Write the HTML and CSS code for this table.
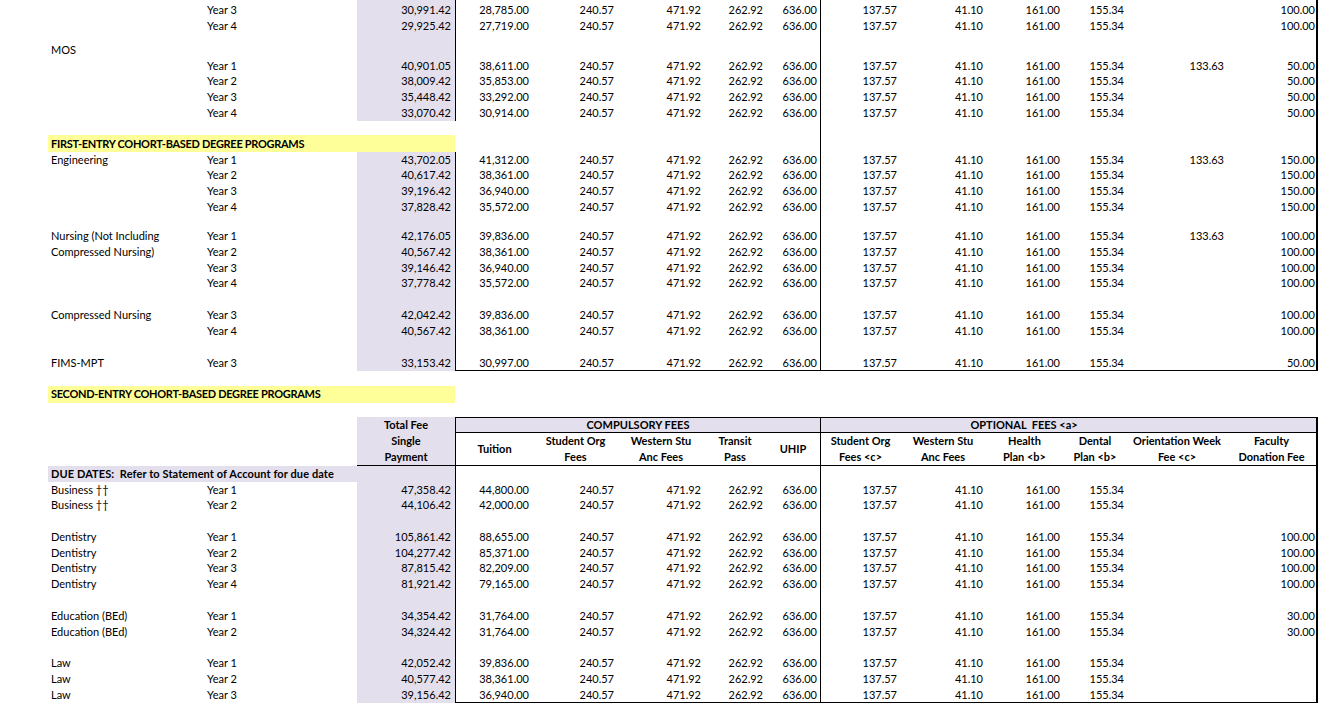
FILE: index.html
```html
<!DOCTYPE html>
<html>
<head>
<meta charset="utf-8">
<title>Fee Schedule</title>
<link rel="stylesheet" href="styles.css">
</head>
<body>
<div class="sheet">
  <div class="row h2"><div class="cell tot"></div><div class="cell tu"></div><div class="cell opt"></div><div class="cell fac"></div></div>

  <div class="row"><div class="cell name"></div><div class="cell yr">Year 3</div><div class="cell num tot">30,991.42</div><div class="cell num tu">28,785.00</div><div class="cell num sof">240.57</div><div class="cell num">471.92</div><div class="cell num">262.92</div><div class="cell num">636.00</div><div class="cell num opt">137.57</div><div class="cell num">41.10</div><div class="cell num">161.00</div><div class="cell num">155.34</div><div class="cell num fac">100.00</div></div>
  <div class="row"><div class="cell name"></div><div class="cell yr">Year 4</div><div class="cell num tot">29,925.42</div><div class="cell num tu">27,719.00</div><div class="cell num sof">240.57</div><div class="cell num">471.92</div><div class="cell num">262.92</div><div class="cell num">636.00</div><div class="cell num opt">137.57</div><div class="cell num">41.10</div><div class="cell num">161.00</div><div class="cell num">155.34</div><div class="cell num fac">100.00</div></div>
  <div class="row h85"><div class="cell tot"></div><div class="cell tu"></div><div class="cell opt"></div><div class="cell fac"></div></div>

  <div class="row"><div class="cell name">MOS</div><div class="cell tot"></div><div class="cell tu"></div><div class="cell opt"></div><div class="cell fac"></div></div>
  <div class="row"><div class="cell name"></div><div class="cell yr">Year 1</div><div class="cell num tot">40,901.05</div><div class="cell num tu">38,611.00</div><div class="cell num sof">240.57</div><div class="cell num">471.92</div><div class="cell num">262.92</div><div class="cell num">636.00</div><div class="cell num opt">137.57</div><div class="cell num">41.10</div><div class="cell num">161.00</div><div class="cell num">155.34</div><div class="cell num">133.63</div><div class="cell num fac">50.00</div></div>
  <div class="row"><div class="cell name"></div><div class="cell yr">Year 2</div><div class="cell num tot">38,009.42</div><div class="cell num tu">35,853.00</div><div class="cell num sof">240.57</div><div class="cell num">471.92</div><div class="cell num">262.92</div><div class="cell num">636.00</div><div class="cell num opt">137.57</div><div class="cell num">41.10</div><div class="cell num">161.00</div><div class="cell num">155.34</div><div class="cell num fac">50.00</div></div>
  <div class="row"><div class="cell name"></div><div class="cell yr">Year 3</div><div class="cell num tot">35,448.42</div><div class="cell num tu">33,292.00</div><div class="cell num sof">240.57</div><div class="cell num">471.92</div><div class="cell num">262.92</div><div class="cell num">636.00</div><div class="cell num opt">137.57</div><div class="cell num">41.10</div><div class="cell num">161.00</div><div class="cell num">155.34</div><div class="cell num fac">50.00</div></div>
  <div class="row"><div class="cell name"></div><div class="cell yr">Year 4</div><div class="cell num tot">33,070.42</div><div class="cell num tu">30,914.00</div><div class="cell num sof">240.57</div><div class="cell num">471.92</div><div class="cell num">262.92</div><div class="cell num">636.00</div><div class="cell num opt">137.57</div><div class="cell num">41.10</div><div class="cell num">161.00</div><div class="cell num">155.34</div><div class="cell num fac">50.00</div></div>
  <div class="row h145"><div class="cell opt"></div><div class="cell fac"></div></div>

  <div class="row h165"><div class="cell ybar">FIRST-ENTRY COHORT-BASED DEGREE PROGRAMS</div><div class="cell opt"></div><div class="cell fac"></div></div>

  <div class="row"><div class="cell name">Engineering</div><div class="cell yr">Year 1</div><div class="cell num tot">43,702.05</div><div class="cell num tu">41,312.00</div><div class="cell num sof">240.57</div><div class="cell num">471.92</div><div class="cell num">262.92</div><div class="cell num">636.00</div><div class="cell num opt">137.57</div><div class="cell num">41.10</div><div class="cell num">161.00</div><div class="cell num">155.34</div><div class="cell num">133.63</div><div class="cell num fac">150.00</div></div>
  <div class="row"><div class="cell name"></div><div class="cell yr">Year 2</div><div class="cell num tot">40,617.42</div><div class="cell num tu">38,361.00</div><div class="cell num sof">240.57</div><div class="cell num">471.92</div><div class="cell num">262.92</div><div class="cell num">636.00</div><div class="cell num opt">137.57</div><div class="cell num">41.10</div><div class="cell num">161.00</div><div class="cell num">155.34</div><div class="cell num fac">150.00</div></div>
  <div class="row"><div class="cell name"></div><div class="cell yr">Year 3</div><div class="cell num tot">39,196.42</div><div class="cell num tu">36,940.00</div><div class="cell num sof">240.57</div><div class="cell num">471.92</div><div class="cell num">262.92</div><div class="cell num">636.00</div><div class="cell num opt">137.57</div><div class="cell num">41.10</div><div class="cell num">161.00</div><div class="cell num">155.34</div><div class="cell num fac">150.00</div></div>
  <div class="row"><div class="cell name"></div><div class="cell yr">Year 4</div><div class="cell num tot">37,828.42</div><div class="cell num tu">35,572.00</div><div class="cell num sof">240.57</div><div class="cell num">471.92</div><div class="cell num">262.92</div><div class="cell num">636.00</div><div class="cell num opt">137.57</div><div class="cell num">41.10</div><div class="cell num">161.00</div><div class="cell num">155.34</div><div class="cell num fac">150.00</div></div>
  <div class="row h135"><div class="cell tot"></div><div class="cell tu"></div><div class="cell opt"></div><div class="cell fac"></div></div>

  <div class="row"><div class="cell name">Nursing (Not Including</div><div class="cell yr">Year 1</div><div class="cell num tot">42,176.05</div><div class="cell num tu">39,836.00</div><div class="cell num sof">240.57</div><div class="cell num">471.92</div><div class="cell num">262.92</div><div class="cell num">636.00</div><div class="cell num opt">137.57</div><div class="cell num">41.10</div><div class="cell num">161.00</div><div class="cell num">155.34</div><div class="cell num">133.63</div><div class="cell num fac">100.00</div></div>
  <div class="row"><div class="cell name">Compressed Nursing)</div><div class="cell yr">Year 2</div><div class="cell num tot">40,567.42</div><div class="cell num tu">38,361.00</div><div class="cell num sof">240.57</div><div class="cell num">471.92</div><div class="cell num">262.92</div><div class="cell num">636.00</div><div class="cell num opt">137.57</div><div class="cell num">41.10</div><div class="cell num">161.00</div><div class="cell num">155.34</div><div class="cell num fac">100.00</div></div>
  <div class="row"><div class="cell name"></div><div class="cell yr">Year 3</div><div class="cell num tot">39,146.42</div><div class="cell num tu">36,940.00</div><div class="cell num sof">240.57</div><div class="cell num">471.92</div><div class="cell num">262.92</div><div class="cell num">636.00</div><div class="cell num opt">137.57</div><div class="cell num">41.10</div><div class="cell num">161.00</div><div class="cell num">155.34</div><div class="cell num fac">100.00</div></div>
  <div class="row"><div class="cell name"></div><div class="cell yr">Year 4</div><div class="cell num tot">37,778.42</div><div class="cell num tu">35,572.00</div><div class="cell num sof">240.57</div><div class="cell num">471.92</div><div class="cell num">262.92</div><div class="cell num">636.00</div><div class="cell num opt">137.57</div><div class="cell num">41.10</div><div class="cell num">161.00</div><div class="cell num">155.34</div><div class="cell num fac">100.00</div></div>
  <div class="row h16"><div class="cell tot"></div><div class="cell tu"></div><div class="cell opt"></div><div class="cell fac"></div></div>

  <div class="row"><div class="cell name">Compressed Nursing</div><div class="cell yr">Year 3</div><div class="cell num tot">42,042.42</div><div class="cell num tu">39,836.00</div><div class="cell num sof">240.57</div><div class="cell num">471.92</div><div class="cell num">262.92</div><div class="cell num">636.00</div><div class="cell num opt">137.57</div><div class="cell num">41.10</div><div class="cell num">161.00</div><div class="cell num">155.34</div><div class="cell num fac">100.00</div></div>
  <div class="row"><div class="cell name"></div><div class="cell yr">Year 4</div><div class="cell num tot">40,567.42</div><div class="cell num tu">38,361.00</div><div class="cell num sof">240.57</div><div class="cell num">471.92</div><div class="cell num">262.92</div><div class="cell num">636.00</div><div class="cell num opt">137.57</div><div class="cell num">41.10</div><div class="cell num">161.00</div><div class="cell num">155.34</div><div class="cell num fac">100.00</div></div>
  <div class="row h165"><div class="cell tot"></div><div class="cell tu"></div><div class="cell opt"></div><div class="cell fac"></div></div>

  <div class="row end"><div class="cell name">FIMS-MPT</div><div class="cell yr">Year 3</div><div class="cell num tot">33,153.42</div><div class="cell num tu">30,997.00</div><div class="cell num sof">240.57</div><div class="cell num">471.92</div><div class="cell num">262.92</div><div class="cell num">636.00</div><div class="cell num opt">137.57</div><div class="cell num">41.10</div><div class="cell num">161.00</div><div class="cell num">155.34</div><div class="cell num or"></div><div class="cell num fac">50.00</div></div>
  <div class="row h15"></div>

  <div class="row h165"><div class="cell ybar">SECOND-ENTRY COHORT-BASED DEGREE PROGRAMS</div></div>
  <div class="row h145"></div>

  <div class="head">
    <div class="hc htot">Total Fee<br>Single<br>Payment</div>
    <div class="hc hgrp hcomp">COMPULSORY FEES</div>
    <div class="hc hgrp hoptg">OPTIONAL&nbsp; FEES &lt;a&gt;</div>
    <div class="hc hgrp hfac1"></div>
    <div class="hc hsub hl c4">Tuition</div>
    <div class="hc hsub c5">Student Org<br>Fees</div>
    <div class="hc hsub c6">Western Stu<br>Anc Fees</div>
    <div class="hc hsub c7">Transit<br>Pass</div>
    <div class="hc hsub c8">UHIP</div>
    <div class="hc hsub hl c9">Student Org<br>Fees &lt;c&gt;</div>
    <div class="hc hsub c10">Western Stu<br>Anc Fees</div>
    <div class="hc hsub c11">Health<br>Plan &lt;b&gt;</div>
    <div class="hc hsub c12">Dental<br>Plan &lt;b&gt;</div>
    <div class="hc hsub c13">Orientation Week<br>Fee &lt;c&gt;</div>
    <div class="hc hsub hr c14">Faculty<br>Donation Fee</div>
  </div>

  <div class="row"><div class="cell due">DUE DATES:&nbsp; Refer to Statement of Account for due date</div><div class="cell tot"></div><div class="cell tu"></div><div class="cell opt"></div><div class="cell fac"></div></div>
  <div class="row"><div class="cell name">Business ††</div><div class="cell yr">Year 1</div><div class="cell num tot">47,358.42</div><div class="cell num tu">44,800.00</div><div class="cell num sof">240.57</div><div class="cell num">471.92</div><div class="cell num">262.92</div><div class="cell num">636.00</div><div class="cell num opt">137.57</div><div class="cell num">41.10</div><div class="cell num">161.00</div><div class="cell num">155.34</div><div class="cell num fac"></div></div>
  <div class="row"><div class="cell name">Business ††</div><div class="cell yr">Year 2</div><div class="cell num tot">44,106.42</div><div class="cell num tu">42,000.00</div><div class="cell num sof">240.57</div><div class="cell num">471.92</div><div class="cell num">262.92</div><div class="cell num">636.00</div><div class="cell num opt">137.57</div><div class="cell num">41.10</div><div class="cell num">161.00</div><div class="cell num">155.34</div><div class="cell num fac"></div></div>
  <div class="row"><div class="cell tot"></div><div class="cell tu"></div><div class="cell opt"></div><div class="cell fac"></div></div>

  <div class="row"><div class="cell name">Dentistry</div><div class="cell yr">Year 1</div><div class="cell num tot">105,861.42</div><div class="cell num tu">88,655.00</div><div class="cell num sof">240.57</div><div class="cell num">471.92</div><div class="cell num">262.92</div><div class="cell num">636.00</div><div class="cell num opt">137.57</div><div class="cell num">41.10</div><div class="cell num">161.00</div><div class="cell num">155.34</div><div class="cell num fac">100.00</div></div>
  <div class="row"><div class="cell name">Dentistry</div><div class="cell yr">Year 2</div><div class="cell num tot">104,277.42</div><div class="cell num tu">85,371.00</div><div class="cell num sof">240.57</div><div class="cell num">471.92</div><div class="cell num">262.92</div><div class="cell num">636.00</div><div class="cell num opt">137.57</div><div class="cell num">41.10</div><div class="cell num">161.00</div><div class="cell num">155.34</div><div class="cell num fac">100.00</div></div>
  <div class="row"><div class="cell name">Dentistry</div><div class="cell yr">Year 3</div><div class="cell num tot">87,815.42</div><div class="cell num tu">82,209.00</div><div class="cell num sof">240.57</div><div class="cell num">471.92</div><div class="cell num">262.92</div><div class="cell num">636.00</div><div class="cell num opt">137.57</div><div class="cell num">41.10</div><div class="cell num">161.00</div><div class="cell num">155.34</div><div class="cell num fac">100.00</div></div>
  <div class="row"><div class="cell name">Dentistry</div><div class="cell yr">Year 4</div><div class="cell num tot">81,921.42</div><div class="cell num tu">79,165.00</div><div class="cell num sof">240.57</div><div class="cell num">471.92</div><div class="cell num">262.92</div><div class="cell num">636.00</div><div class="cell num opt">137.57</div><div class="cell num">41.10</div><div class="cell num">161.00</div><div class="cell num">155.34</div><div class="cell num fac">100.00</div></div>
  <div class="row h16"><div class="cell tot"></div><div class="cell tu"></div><div class="cell opt"></div><div class="cell fac"></div></div>

  <div class="row"><div class="cell name">Education (BEd)</div><div class="cell yr">Year 1</div><div class="cell num tot">34,354.42</div><div class="cell num tu">31,764.00</div><div class="cell num sof">240.57</div><div class="cell num">471.92</div><div class="cell num">262.92</div><div class="cell num">636.00</div><div class="cell num opt">137.57</div><div class="cell num">41.10</div><div class="cell num">161.00</div><div class="cell num">155.34</div><div class="cell num fac">30.00</div></div>
  <div class="row"><div class="cell name">Education (BEd)</div><div class="cell yr">Year 2</div><div class="cell num tot">34,324.42</div><div class="cell num tu">31,764.00</div><div class="cell num sof">240.57</div><div class="cell num">471.92</div><div class="cell num">262.92</div><div class="cell num">636.00</div><div class="cell num opt">137.57</div><div class="cell num">41.10</div><div class="cell num">161.00</div><div class="cell num">155.34</div><div class="cell num fac">30.00</div></div>
  <div class="row"><div class="cell tot"></div><div class="cell tu"></div><div class="cell opt"></div><div class="cell fac"></div></div>

  <div class="row"><div class="cell name">Law</div><div class="cell yr">Year 1</div><div class="cell num tot">42,052.42</div><div class="cell num tu">39,836.00</div><div class="cell num sof">240.57</div><div class="cell num">471.92</div><div class="cell num">262.92</div><div class="cell num">636.00</div><div class="cell num opt">137.57</div><div class="cell num">41.10</div><div class="cell num">161.00</div><div class="cell num">155.34</div><div class="cell num fac"></div></div>
  <div class="row"><div class="cell name">Law</div><div class="cell yr">Year 2</div><div class="cell num tot">40,577.42</div><div class="cell num tu">38,361.00</div><div class="cell num sof">240.57</div><div class="cell num">471.92</div><div class="cell num">262.92</div><div class="cell num">636.00</div><div class="cell num opt">137.57</div><div class="cell num">41.10</div><div class="cell num">161.00</div><div class="cell num">155.34</div><div class="cell num fac"></div></div>
  <div class="row end h165"><div class="cell name">Law</div><div class="cell yr">Year 3</div><div class="cell num tot">39,156.42</div><div class="cell num tu">36,940.00</div><div class="cell num sof">240.57</div><div class="cell num">471.92</div><div class="cell num">262.92</div><div class="cell num">636.00</div><div class="cell num opt">137.57</div><div class="cell num">41.10</div><div class="cell num">161.00</div><div class="cell num">155.34</div><div class="cell num or"></div><div class="cell num fac"></div></div>
</div>
</body>
</html>
```

FILE: styles.css
```css
* {
  box-sizing: border-box;
}

html,
body {
  margin: 0;
  padding: 0;
}

body {
  width: 1319px;
  height: 717px;
  overflow: hidden;
  background: #ffffff;
  color: #000000;
  font-family: Lato, "Liberation Sans", sans-serif;
  font-size: 11px;
}

.sheet {
  display: flex;
  flex-direction: column;
}

.row,
.head {
  display: grid;
  grid-template-columns: 156px 153px 98px 78px 85px 86px 62px 54px 80px 86px 77px 64px 100px 91px;
  width: 1270px;
  margin-left: 48px;
  flex: none;
}

.row {
  grid-template-rows: 100%;
  height: 15.75px;
}

.h2 { height: 2px; }
.h85 { height: 8.5px; }
.h135 { height: 13.5px; }
.h145 { height: 14.5px; }
.h15 { height: 15px; }
.h16 { height: 16px; }
.h165 { height: 16.5px; }

.cell {
  grid-row: 1;
  display: flex;
  align-items: center;
  white-space: nowrap;
  min-width: 0;
  line-height: 14px;
}

.name,
.yr {
  padding-left: 3px;
}

.num {
  justify-content: flex-end;
  padding-right: 3px;
}

.tot {
  grid-column: 3;
  background: #e4dfec;
  padding-right: 4px;
}

.tu {
  grid-column: 4;
  border-left: 1px solid #000;
  padding-right: 4px;
}

.sof {
  padding-right: 4px;
}

.opt {
  grid-column: 9;
  border-left: 1px solid #000;
}

.or {
  grid-column: 13;
}

.fac {
  grid-column: 14;
  border-right: 2px solid #000;
  padding-right: 1px;
}

.end > .cell:nth-child(n+4) {
  border-bottom: 1px solid #000;
}

.ybar {
  grid-column: 1 / 4;
  background: #ffff99;
  font-weight: 700;
  letter-spacing: -0.3px;
  padding-left: 3px;
}

.due {
  grid-column: 1 / 3;
  background: #e4dfec;
  font-weight: 700;
  letter-spacing: 0.1px;
  padding-left: 3px;
}

/* header block */
.head {
  grid-template-rows: 16px 16.5px 16.5px;
}

.hc {
  display: flex;
  align-items: center;
  justify-content: center;
  text-align: center;
  font-weight: 700;
  line-height: 16px;
  white-space: nowrap;
}

.htot {
  grid-column: 3;
  grid-row: 1 / 4;
  background: #e4dfec;
  border-bottom: 1px solid #000;
}

.hgrp {
  grid-row: 1;
  background: #e4dfec;
  border-top: 1px solid #000;
  border-bottom: 1px solid #000;
}

.hcomp {
  grid-column: 4 / 9;
  border-left: 1px solid #000;
}

.hoptg {
  grid-column: 9 / 14;
  border-left: 1px solid #000;
}

.hfac1 {
  grid-column: 14;
  border-right: 2px solid #000;
}

.hsub {
  grid-row: 2 / 4;
  border-bottom: 1px solid #000;
}

.hl {
  border-left: 1px solid #000;
}

.hr {
  border-right: 2px solid #000;
}

.c4 { grid-column: 4; }
.c5 { grid-column: 5; }
.c6 { grid-column: 6; }
.c7 { grid-column: 7; }
.c8 { grid-column: 8; }
.c9 { grid-column: 9; }
.c10 { grid-column: 10; }
.c11 { grid-column: 11; }
.c12 { grid-column: 12; }
.c13 { grid-column: 13; }
.c14 { grid-column: 14; }
```
